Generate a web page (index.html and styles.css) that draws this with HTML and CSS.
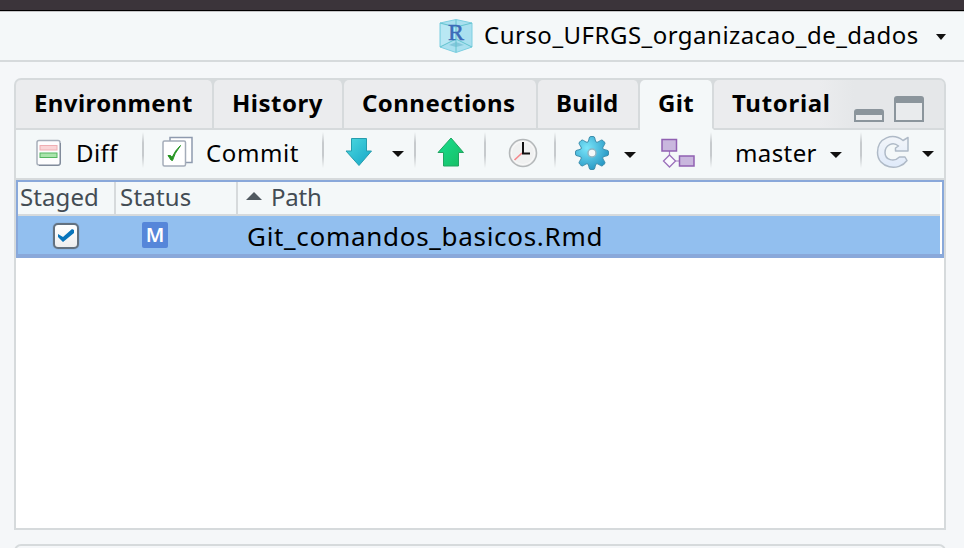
FILE: index.html
```html
<!DOCTYPE html>
<html lang="pt-BR">
<head>
<meta charset="utf-8">
<title>Curso_UFRGS_organizacao_de_dados</title>
<link rel="stylesheet" href="styles.css">
</head>
<body>
<div class="window-edge"></div>
<header class="project-bar">
  <svg class="project-icon" width="34" height="36" viewBox="0 0 34 36">
    <path d="M17 1.500 33 5v24L17 34.500 1 29V5z" fill="#a9e0ef" stroke="#7dcfe1"/>
    <path d="M2 6l14 4v11L2 28z" fill="#c4edf6" opacity=".6"/>
    <path d="M10 27l7-3 8 3-8 2z" fill="#6bb5cd" opacity=".6"/>
    <path d="M1 5l16 4 16-4M17 2v32M1 29l16-8 16 8" fill="none" stroke="#64c4cf"/>
    <text x="17" y="22" text-anchor="middle" class="r-letter">R</text>
  </svg>
  <span class="project-name">Curso_UFRGS_organizacao_de_dados</span>
  <i class="caret"></i>
</header>

<main class="panel">
  <nav class="tabs">
    <div class="tab t-env"><span>Environment</span></div>
    <div class="tab t-hist"><span>History</span></div>
    <div class="tab t-conn"><span>Connections</span></div>
    <div class="tab t-build"><span>Build</span></div>
    <div class="tab t-git active"><span>Git</span></div>
    <div class="tab t-tut"><span>Tutorial</span></div>
    <svg class="window-buttons" width="70" height="26" viewBox="0 0 70 26">
      <path d="M0 26V16q0-3 3-3h24q3 0 3 3v10z" fill="#8b959c"/><path d="M2 19h26v5H2z" fill="#e9ebed"/>
      <path d="M40 26V3q0-3 3-3h24q3 0 3 3v23z" fill="#8b959c"/><path d="M42 7h26v17H42z" fill="#e9ebed"/>
    </svg>
  </nav>

  <div class="toolbar">
    <div class="group g-diff">
      <svg width="26" height="28" viewBox="0 0 26 28">
        <rect x="1" y="1.500" width="23" height="24.500" rx="2" fill="#fdfdfe" stroke="#a7afba" stroke-width="1.500"/>
        <path d="M3 26.500h19q2.500 0 2.500-2.500V4" fill="none" stroke="#818b9b"/>
        <rect x="4" y="6.500" width="17" height="4.500" fill="#fad5d7" stroke="#efaeb2"/>
        <rect x="4" y="14" width="17" height="4.500" fill="#aae4ac" stroke="#55b562"/>
      </svg>
      <span>Diff</span>
    </div>
    <div class="group g-commit">
      <svg width="32" height="32" viewBox="0 0 32 32">
        <rect x="8" y="1.500" width="22" height="25" fill="#fff" stroke="#8e9aae" stroke-width="1.500"/>
        <rect x="1" y="5" width="22.500" height="25" rx="1.500" fill="#fff" stroke="#a4acb9" stroke-width="1.500"/>
        <path d="M6 19.500q3-1 4 2 3-7 8.500-12Q12 18 10.500 24.500L9 24z" fill="#23931f" stroke="#23931f"/>
      </svg>
      <span>Commit</span>
    </div>
    <div class="group g-pull">
      <svg width="28" height="30" viewBox="0 0 28 30">
        <defs><linearGradient id="pull" x2="1" y2="1"><stop stop-color="#4bd9df"/><stop offset="1" stop-color="#15a5c7"/></linearGradient></defs>
        <path d="M6.500 1.500h15v12.500h5L14 28.500 1 14h5.500z" fill="url(#pull)" stroke="#269dad" stroke-linejoin="round"/>
      </svg>
      <i class="caret"></i>
    </div>
    <div class="group g-push">
      <svg width="28" height="30" viewBox="0 0 28 30">
        <defs><linearGradient id="push" x2="1" y2="1"><stop stop-color="#18df91"/><stop offset="1" stop-color="#17bd62"/></linearGradient></defs>
        <path d="M14 1 26.500 15.500h-5V29H6.500V15.500H1z" fill="url(#push)" stroke="#20a562" stroke-linejoin="round"/>
      </svg>
    </div>
    <div class="group g-history">
      <svg width="30" height="30" viewBox="0 0 30 30">
        <circle cx="15" cy="15" r="13.500" fill="#f0f1f1" stroke="#b4b8ba" stroke-width="1.600"/>
        <circle cx="15" cy="15" r="11.500" fill="none" stroke="#fafafa"/>
        <path d="M14 15l-7.500 7" stroke="#f5898d" stroke-width="1.700"/>
        <path d="M15 4v11.500h7" fill="none" stroke="#111" stroke-width="2"/>
      </svg>
    </div>
    <div class="group g-gear">
      <svg width="36" height="36" viewBox="-18 -18 36 36">
        <defs><radialGradient id="gear" cx=".35" cy=".35" r=".7"><stop stop-color="#7be6fa"/><stop offset="1" stop-color="#2697c4"/></radialGradient></defs>
        <path fill="url(#gear)" stroke="#3d8eac" stroke-linejoin="round" d="M-4-11Q-3-13-2.800-15Q-2.600-16.500-1-16.500H1Q2.600-16.500 2.800-15Q3-13 4-11L5-10.600Q7-11.400 8.600-12.600Q9.900-13.500 11-12.400L12.400-11Q13.500-9.900 12.600-8.600Q11.400-7 10.600-5L11-4Q13-3 15-2.800Q16.500-2.600 16.500-1V1Q16.500 2.600 15 2.800Q13 3 11 4L10.600 5Q11.400 7 12.600 8.600Q13.500 9.900 12.400 11L11 12.400Q9.900 13.500 8.600 12.600Q7 11.400 5 10.600L4 11Q3 13 2.800 15Q2.600 16.500 1 16.500H-1Q-2.600 16.500-2.800 15Q-3 13-4 11L-5 10.600Q-7 11.400-8.600 12.600Q-9.900 13.500-11 12.400L-12.400 11Q-13.500 9.900-12.600 8.600Q-11.400 7-10.600 5L-11 4Q-13 3-15 2.800Q-16.500 2.600-16.500 1V-1Q-16.500-2.600-15-2.800Q-13-3-11-4L-10.600-5Q-11.400-7-12.600-8.600Q-13.500-9.900-12.400-11L-11-12.400Q-9.900-13.500-8.600-12.600Q-7-11.400-5-10.600z"/>
        <circle r="4" fill="#f4f8f9" stroke="#8fb4c2" stroke-width="1.500"/>
      </svg>
      <i class="caret"></i>
      <svg class="branch-icon" width="34" height="30" viewBox="0 0 34 30">
        <path d="M8.500 12v5M14 23h5" stroke="#a77fc4" stroke-width="1.200"/>
        <rect x="1" y="1.500" width="14.500" height="11.500" fill="#c9b7de" stroke="#9060b2" stroke-width="1.500"/>
        <rect x="18.500" y="18" width="14.500" height="10" fill="#c9b7de" stroke="#9060b2" stroke-width="1.500"/>
        <path d="M8.500 17l6 6-6 6-6-6z" fill="#fbfaff" stroke="#9b70bb" stroke-width="1.300"/>
      </svg>
    </div>
    <div class="group g-master">
      <span>master</span>
      <i class="caret"></i>
    </div>
    <div class="group g-refresh">
      <svg width="34" height="34" viewBox="0 0 34 34">
        <defs><linearGradient id="fresh" x2="0" y2="1"><stop stop-color="#f2f5f9"/><stop offset="1" stop-color="#dfeafa"/></linearGradient></defs>
        <path d="M27 5.500 32 2.500v13.500H19.500v-3L22.500 11C17 6 9 10 9 17.500c0 7.500 9 10 14.500 4.500h5.500l2 3.500C23 37 1.500 33.500 1.500 17.500 1.500 2.500 17-2.500 27 5.500z" fill="url(#fresh)" stroke="#afbac7" stroke-width="1.500" stroke-linejoin="round"/>
      </svg>
      <i class="caret"></i>
    </div>
  </div>

  <section class="changes">
    <div class="row head">
      <div class="cell c-staged"><span>Staged</span></div>
      <div class="cell c-status"><span>Status</span></div>
      <div class="cell c-path"><i class="sort"></i><span>Path</span></div>
    </div>
    <div class="row item">
      <div class="cell c-staged">
        <div class="checkbox"><svg width="18" height="16" viewBox="0 0 18 16"><path d="M1 6l5 3 9-8 2 1v3L6 14 1 9z" fill="#0874bb"/></svg></div>
      </div>
      <div class="cell c-status"><b class="badge">M</b></div>
      <div class="cell c-path"><span class="file">Git_comandos_basicos.Rmd</span></div>
    </div>
  </section>
</main>
<div class="next-panel"></div>
</body>
</html>
```
FILE: styles.css
```css
* { box-sizing: border-box; }
body {
  margin: 0;
  height: 548px;
  overflow: hidden;
  background: #f5f7f9;
  color: #000;
  font: 24px/30px "Noto Sans", "Open Sans", sans-serif;
  white-space: nowrap;
}
svg { display: block; flex: none; }
span { display: block; padding-bottom: 2px; }
.window-edge { height: 12px; background: #3b343a; border-bottom: 1px solid #c5c6c8; box-shadow: inset 0 -1px #000; }
.project-bar { display: flex; align-items: center; height: 50px; padding-left: 438px; background: #f4f8f9; border-bottom: 2px solid #d6dadc; }
.project-icon { margin: 0 11px 1px 1px; }
.r-letter { font: 24px "Liberation Serif", serif; fill: #3c6bb8; stroke: #3c6bb8; stroke-width: 0.5px; }
.project-name { width: 451px; letter-spacing: 0.49px; }
.caret { display: block; flex: none; width: 12px; height: 6px; background: #111; clip-path: polygon(0 0, 100% 0, 50% 100%); }
.project-bar .caret { width: 10px; margin: 2px 0 0 1px; }

.panel { width: 932px; height: 452px; margin: 16px 0 0 14px; border: 2px solid #d6dadc; border-radius: 7px 7px 0 0; background: #fff; overflow: hidden; }
.tabs { display: flex; height: 50px; background: #d6dadc; }
.tab { display: flex; align-items: center; height: 50px; padding-left: 18px; border-right: 2px solid #d6dadc; border-bottom: 2px solid #d6dadc; border-radius: 5px 6px 0 0; background: #ebecee; font-weight: 700; letter-spacing: 0.4px; }
.t-env { width: 198px; }
.t-hist { width: 130px; letter-spacing: 0.5px; }
.t-conn { width: 194px; letter-spacing: 0.45px; }
.t-build { width: 102px; letter-spacing: 0.3px; }
.t-git { width: 74px; }
.t-tut { flex: 1; border-right: 0; border-radius: 5px 0 0 0; background: linear-gradient(90deg, #ebecee 105px, #e5e7e9); letter-spacing: 0.7px; }
.tab.active { background: #f4f8f9; border-bottom-color: #f4f8f9; }
.window-buttons { width: 90px; height: 50px; padding: 16px 20px 6px 0; border-bottom: 2px solid #d6dadc; background: #e5e7e9; }

.toolbar { display: flex; height: 50px; background: #f4f8f9; border-bottom: 2px solid #d6dadc; letter-spacing: 0.4px; }
.group { display: flex; align-items: center; height: 48px; background: linear-gradient(#f4f8f9, #c6cacd 30%, #c6cacd 65%, #f4f8f9) right 2px / 2px 36px no-repeat; }
.group svg { margin-bottom: 3px; }
.g-diff { width: 128px; padding-left: 20px; gap: 14px; }
.g-commit { width: 180px; padding-left: 18px; gap: 12px; letter-spacing: 0.6px; }
.g-pull { width: 92px; padding-left: 21px; gap: 19px; }
.g-pull svg { margin-bottom: 5px; }
.g-push svg { margin-bottom: 5px; }
.g-commit svg, .g-refresh svg { margin-bottom: 5px; }
.g-push { width: 70px; padding-left: 21px; }
.g-history { width: 70px; padding-left: 22px; }
.g-gear { width: 156px; padding-left: 18px; gap: 14px; }
.g-gear .caret, .g-master .caret { margin-top: 2px; }
.branch-icon { margin-left: 11px; }
.g-master { width: 150px; padding-left: 23px; gap: 13px; }
.g-refresh { flex: 1; padding-left: 14px; gap: 12px; background: none; }

.changes { height: 78px; border: 2px solid #89a8da; border-bottom-width: 4px; padding-right: 2px; }
.row { display: flex; }
.head { height: 34px; background: #f4f8f9; border-bottom: 2px solid #d6dadc; color: #434c54; }
.item { height: 38px; background: #92bfef; }
.cell { display: flex; align-items: center; }
.c-staged { width: 98px; }
.c-status { width: 122px; }
.c-path { flex: 1; }
.head .c-staged, .head .c-status { border-right: 2px solid #d6dadc; }
.head .cell { padding-left: 2px; letter-spacing: 0.1px; }
.head .c-status { padding-left: 4px; letter-spacing: 0.2px; }
.head .c-path { padding-left: 8px; gap: 9px; letter-spacing: -0.2px; }
.sort { display: block; width: 16px; height: 8px; margin-bottom: 4px; background: #505960; clip-path: polygon(50% 0, 100% 100%, 0 100%); }
.checkbox { display: flex; align-items: center; justify-content: center; width: 26px; height: 26px; margin: 2px 0 0 35px; background: linear-gradient(#fff, #eee); border: 2px solid #63717f; border-radius: 5px; box-shadow: 0 0 1px #63717f; }
.badge { width: 26px; height: 26px; margin-left: 26px; border-radius: 2px; background: #5686d9; color: #fff; font: 600 20px/25px "Noto Sans", sans-serif; text-align: center; }
.item .c-path { padding-left: 9px; }
.file { padding: 1px 0 0; font-size: 26px; letter-spacing: 0.7px; }
.next-panel { width: 932px; height: 20px; margin: 14px 0 0 14px; border: 2px solid #d6dadc; border-radius: 7px; }
```
